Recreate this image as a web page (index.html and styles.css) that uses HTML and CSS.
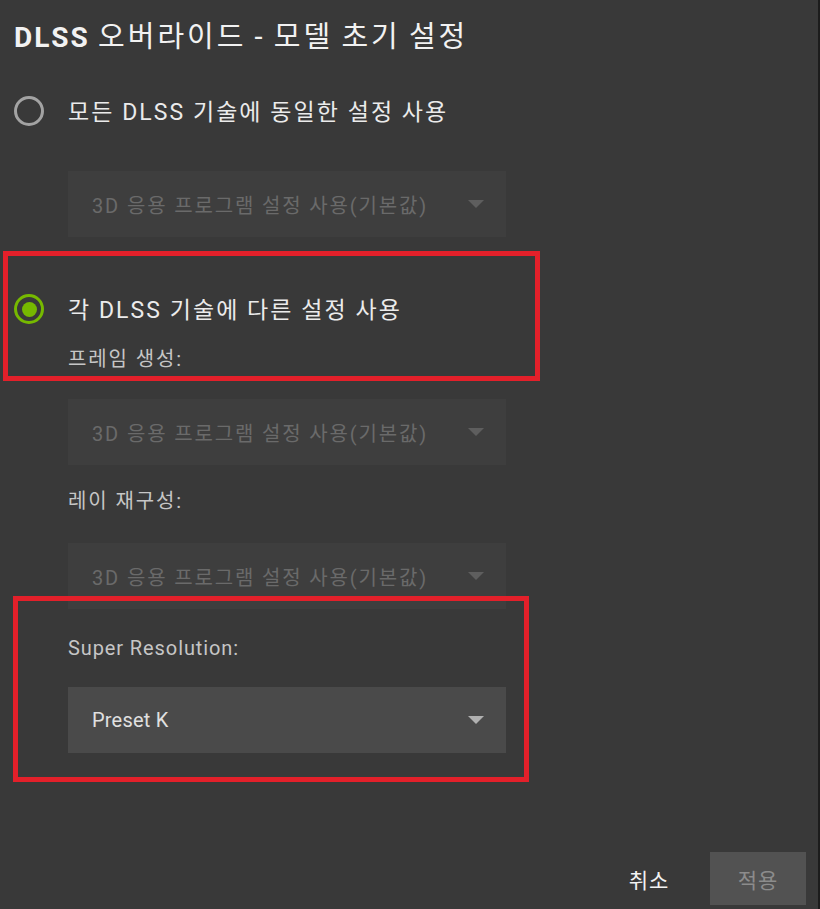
FILE: index.html
```html
<!DOCTYPE html>
<html lang="ko">
<head>
<meta charset="utf-8">
<title>DLSS 오버라이드 - 모델 초기 설정</title>
<link rel="stylesheet" href="styles.css">
</head>
<body>
<div class="dialog">
  <h1 class="title"><span class="title-strong">DLSS</span> 오버라이드 - 모델 초기 설정</h1>

  <div class="radio-row first">
    <span class="radio"></span>
    <span class="radio-label">모든 DLSS 기술에 동일한 설정 사용</span>
  </div>
  <div class="select disabled select-first">
    <span class="select-text">3D 응용 프로그램 설정 사용(기본값)</span>
    <span class="arrow"></span>
  </div>

  <div class="radio-row second">
    <span class="radio checked"><span class="dot"></span></span>
    <span class="radio-label">각 DLSS 기술에 다른 설정 사용</span>
  </div>

  <div class="field field-frame">
    <div class="field-label">프레임 생성:</div>
    <div class="select disabled">
      <span class="select-text">3D 응용 프로그램 설정 사용(기본값)</span>
      <span class="arrow"></span>
    </div>
  </div>

  <div class="field field-ray">
    <div class="field-label">레이 재구성:</div>
    <div class="select disabled">
      <span class="select-text">3D 응용 프로그램 설정 사용(기본값)</span>
      <span class="arrow"></span>
    </div>
  </div>

  <div class="field field-sr">
    <div class="field-label latin">Super Resolution:</div>
    <div class="select active">
      <span class="select-text latin">Preset K</span>
      <span class="arrow"></span>
    </div>
  </div>

  <div class="footer">
    <button class="btn cancel">취소</button>
    <button class="btn apply">적용</button>
  </div>

  <div class="highlight box-one"></div>
  <div class="highlight box-two"></div>
</div>
</body>
</html>
```
FILE: styles.css
```css
html, body {
  margin: 0;
  padding: 0;
  background: #393939;
}

body {
  font-family: Roboto, "Noto Sans CJK KR", sans-serif;
  color: #e6e6e6;
}

.dialog {
  position: relative;
  width: 820px;
  height: 909px;
  border-right: 2px solid #1c1c1c;
  display: flex;
  flex-direction: column;
  box-sizing: border-box;
}

.title {
  margin: 17px 0 0 14px;
  font-size: 29px;
  line-height: 40px;
  font-weight: 400;
  color: #f2f2f2;
  letter-spacing: 3px;
  word-spacing: -2px;
}

.title-strong {
  font-size: 28px;
  font-weight: 700;
  letter-spacing: 2px;
}

.radio-row {
  display: flex;
  align-items: center;
  gap: 24px;
  padding-left: 14px;
  height: 30px;
}

.radio-row.first {
  margin-top: 38px;
}

.radio-row.second {
  margin-top: 57px;
}

.radio {
  width: 30px;
  height: 30px;
  box-sizing: border-box;
  border: 3px solid #a3a3a3;
  border-radius: 50%;
  display: flex;
  align-items: center;
  justify-content: center;
  flex-shrink: 0;
}

.radio.checked {
  border-color: #76b900;
}

.dot {
  width: 15px;
  height: 15px;
  border-radius: 50%;
  background: #76b900;
}

.radio-label {
  font-size: 23px;
  color: #ebebeb;
  letter-spacing: 2.05px;
  position: relative;
  top: -1px;
}

.select {
  margin-left: 68px;
  width: 438px;
  height: 66px;
  box-sizing: border-box;
  padding: 0 22px 0 24px;
  display: flex;
  align-items: center;
  justify-content: space-between;
  font-size: 20px;
  letter-spacing: 1.85px;
}

.select-first {
  margin-top: 45px;
}

.select.disabled {
  background: #3e3e3e;
  color: #6a6a6a;
}

.select.active {
  background: #4a4a4a;
  color: #e0e0e0;
}

.arrow {
  width: 0;
  height: 0;
  border-left: 8px solid transparent;
  border-right: 8px solid transparent;
  border-top: 8px solid #5e5e5e;
}

.select.active .arrow {
  border-top-color: #b0b0b0;
}

.field {
  display: flex;
  flex-direction: column;
}

.field-label {
  margin-left: 68px;
  font-size: 20px;
  line-height: 28px;
  color: #c6c6c6;
  letter-spacing: 1.9px;
}

.latin {
  letter-spacing: 0.9px;
}

.select-text.latin {
  letter-spacing: 0.2px;
}

.field-frame .field-label {
  margin-top: 21px;
  margin-bottom: 26px;
}

.field-ray .field-label {
  margin-top: 22px;
  margin-bottom: 28px;
}

.field-sr .field-label {
  margin-top: 25px;
  margin-bottom: 25px;
}

.footer {
  margin-top: auto;
  margin-bottom: 4px;
  display: flex;
  justify-content: flex-end;
  align-items: center;
  gap: 20px;
  padding-right: 12px;
}

.btn {
  font-family: Roboto, "Noto Sans CJK KR", sans-serif;
  font-size: 21px;
  letter-spacing: 1px;
  border: none;
  height: 53px;
  padding: 0;
}

.cancel {
  width: 82px;
  background: transparent;
  color: #f2f2f2;
}

.apply {
  width: 96px;
  background: #525252;
  color: #8c8c8c;
}

.highlight {
  position: absolute;
  border: 5px solid #e3202a;
  box-sizing: border-box;
  pointer-events: none;
}

.box-one {
  left: 3px;
  top: 251px;
  width: 537px;
  height: 130px;
}

.box-two {
  left: 13px;
  top: 596px;
  width: 516px;
  height: 186px;
}
```
